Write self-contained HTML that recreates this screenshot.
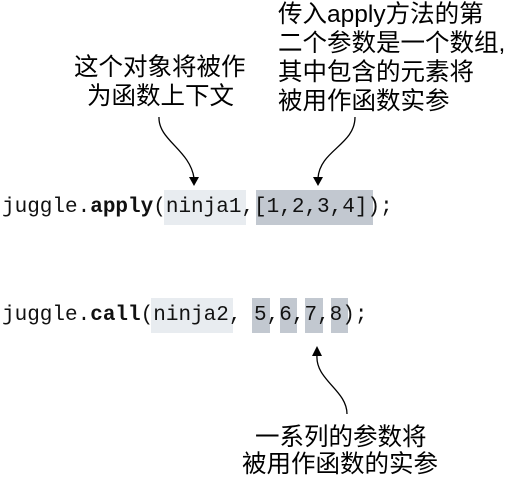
<!DOCTYPE html>
<html><head><meta charset="utf-8"><style>
body{margin:0;width:522px;height:476px;background:#fff;position:relative;overflow:hidden}
.t{position:absolute;font-family:"Liberation Sans","Noto Sans CJK SC",sans-serif;font-size:24.5px;line-height:29px;color:#000;white-space:nowrap}
.c{position:absolute;font-family:"Liberation Mono",monospace;font-size:21px;line-height:35px;white-space:pre;color:#111}
.b{position:absolute}
</style></head><body>
<div class="b" style="left:164px;top:190px;width:82px;height:35px;background:#e8ecf0"></div>
<div class="b" style="left:256px;top:190px;width:117px;height:35px;background:#c2c8d0"></div>
<div class="b" style="left:151px;top:298px;width:82px;height:35px;background:#e8ecf0"></div>
<div class="b" style="left:252px;top:298px;width:18px;height:35px;background:#c2c8d0"></div>
<div class="b" style="left:280px;top:298px;width:17px;height:35px;background:#c2c8d0"></div>
<div class="b" style="left:305px;top:298px;width:18px;height:35px;background:#c2c8d0"></div>
<div class="b" style="left:331px;top:298px;width:17px;height:35px;background:#c2c8d0"></div>
<div class="c" style="left:2px;top:190px">juggle.<b>apply</b>(ninja1,[1,2,3,4]);</div>
<div class="c" style="left:2px;top:298px">juggle.<b>call</b>(ninja2, 5,6,7,8);</div>
<div class="t" style="left:74px;top:53px">这个对象将被作</div>
<div class="t" style="left:87px;top:82px">为函数上下文</div>
<div class="t" style="left:278px;top:0px">传入apply方法的第</div>
<div class="t" style="left:278px;top:29px">二个参数是一个数组,</div>
<div class="t" style="left:278px;top:58px">其中包含的元素将</div>
<div class="t" style="left:278px;top:87px">被用作函数实参</div>
<div class="t" style="left:255px;top:423px">一系列的参数将</div>
<div class="t" style="left:242px;top:450px">被用作函数的实参</div>
<svg width="522" height="476" style="position:absolute;left:0;top:0">
<g fill="none" stroke="#000" stroke-width="1.3">
<path d="M159 117 C158 140 190 150 194 178"/>
<path d="M355 117 C355 145 320 150 318 178"/>
<path d="M347 414 C347 390 315 380 317 355"/>
</g>
<g fill="#000">
<path d="M189 177 L199 177 L194 186Z"/>
<path d="M313 177 L323 177 L318 186Z"/>
<path d="M312 356 L322 356 L317 346Z"/>
</g>
</svg>
</body></html>
